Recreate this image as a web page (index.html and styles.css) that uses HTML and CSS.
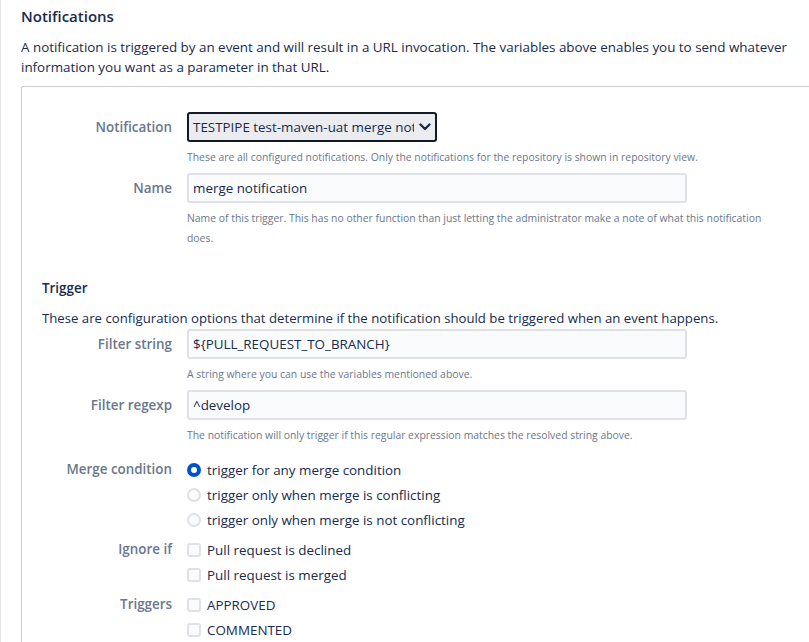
FILE: index.html
```html
<!DOCTYPE html>
<html lang="en">
<head>
  <meta charset="UTF-8" />
  <meta name="viewport" content="width=device-width, initial-scale=1" />
  <title>Notifications</title>
  <link rel="stylesheet" href="styles.css">
</head>
<body>

  <div class="page">
    <h2 class="page-title">Notifications</h2>
    <p class="intro">A notification is triggered by an event and will result in a URL invocation. The variables above enables you to send whatever information you want as a parameter in that URL.</p>

    <form class="card">
      <div class="field-group">
        <span class="field-label">Notification</span>
        <div class="field">
          <div class="select">
            <span class="select-value">TESTPIPE test-maven-uat merge notification</span>
            <svg class="chevron" width="12" height="8" viewBox="0 0 12 8"><polyline points="1.5,1.5 6,6 10.5,1.5" fill="none" stroke="#172b4d" stroke-width="2.4" stroke-linecap="round" stroke-linejoin="round"/></svg>
          </div>
          <div class="description">These are all configured notifications. Only the notifications for the repository is shown in repository view.</div>
        </div>
      </div>

      <div class="field-group">
        <span class="field-label">Name</span>
        <div class="field">
          <input class="text" type="text" value="merge notification" />
          <div class="description">Name of this trigger. This has no other function than just letting the administrator make a note of what this notification does.</div>
        </div>
      </div>

      <h3 class="section-title">Trigger</h3>
      <p class="section-intro">These are configuration options that determine if the notification should be triggered when an event happens.</p>

      <div class="field-group">
        <span class="field-label">Filter string</span>
        <div class="field">
          <input class="text" type="text" value="${PULL_REQUEST_TO_BRANCH}" />
          <div class="description">A string where you can use the variables mentioned above.</div>
        </div>
      </div>

      <div class="field-group">
        <span class="field-label">Filter regexp</span>
        <div class="field">
          <input class="text" type="text" value="^develop" />
          <div class="description">The notification will only trigger if this regular expression matches the resolved string above.</div>
        </div>
      </div>

      <!-- radios / checkboxes -->
      <div class="field-group options first-options">
        <span class="field-label">Merge condition</span>
        <div class="field">
          <label class="option"><span class="radio checked"></span>trigger for any merge condition</label>
          <label class="option"><span class="radio"></span>trigger only when merge is conflicting</label>
          <label class="option"><span class="radio"></span>trigger only when merge is not conflicting</label>
        </div>
      </div>

      <div class="field-group options">
        <span class="field-label">Ignore if</span>
        <div class="field">
          <label class="option"><span class="checkbox"></span>Pull request is declined</label>
          <label class="option"><span class="checkbox"></span>Pull request is merged</label>
        </div>
      </div>

      <div class="field-group options">
        <span class="field-label">Triggers</span>
        <div class="field">
          <label class="option"><span class="checkbox"></span>APPROVED</label>
          <label class="option"><span class="checkbox"></span>COMMENTED</label>
        </div>
      </div>
    </form>
  </div>

</body>
</html>
```

FILE: styles.css
```css
body {
  margin: 0;
  font-family: 'Open Sans', 'Noto Sans', sans-serif;
  color: #172b4d;
  background: #fff;
  border-left: 1px solid #e6e6e6;
  height: 642px;
  overflow: hidden;
}

.page {
  width: 830px;
  padding: 5px 0 0 20px;
}

.page-title {
  margin: 0;
  font-size: 15px;
  font-weight: 600;
  line-height: 22px;
}

.intro {
  max-width: 770px;
  margin: 10px 0 0;
  font-size: 13.4px;
  line-height: 20px;
}

.card {
  margin-top: 9px;
  border: 1px solid #cfcfcf;
  border-radius: 2px;
  padding: 25px 20px 20px;
}

.field-group {
  display: flex;
  align-items: flex-start;
}

.field-group + .field-group {
  margin-top: 6px;
}

.field-label {
  width: 130px;
  margin-right: 15px;
  flex-shrink: 0;
  text-align: right;
  font-size: 13.4px;
  font-weight: 600;
  line-height: 30px;
  color: #6b778c;
}

.field {
  display: flex;
  flex-direction: column;
}

.select {
  box-sizing: border-box;
  width: 250px;
  height: 30px;
  display: flex;
  align-items: center;
  padding: 0 4px;
  background: #ebecf0;
  border: 2px solid #141a26;
  border-radius: 3px;
  font-size: 13.4px;
}

.select-value {
  width: 222px;
  overflow: hidden;
  white-space: nowrap;
}

.chevron {
  margin-left: 5px;
}

.text {
  box-sizing: border-box;
  width: 500px;
  height: 30px;
  margin: 0;
  padding: 0 4px;
  background: #fafbfc;
  border: 2px solid #dfe1e6;
  border-radius: 3px;
  font-family: inherit;
  font-size: 13.4px;
  color: #172b4d;
}

.description {
  max-width: 590px;
  margin-top: 5px;
  font-size: 10.4px;
  line-height: 20px;
  color: #6b778c;
}

.section-title {
  margin: 30px 0 0;
  font-size: 13.4px;
  font-weight: 600;
  line-height: 20px;
}

.section-intro {
  margin: 10px 0 1px;
  font-size: 13.2px;
  line-height: 20px;
}

.section-intro + .field-group {
  margin-top: 0;
}

.field-group.first-options {
  margin-top: 12px;
}

.options + .options {
  margin-top: 5px;
}

.options .field-label {
  line-height: 25px;
}

.option {
  display: flex;
  align-items: center;
  gap: 6px;
  height: 25px;
  font-size: 13.4px;
  white-space: nowrap;
}

.radio,
.checkbox {
  box-sizing: border-box;
  width: 14px;
  height: 14px;
  border: 2px solid #dfe1e6;
  background: #fafbfc;
}

.radio {
  border-radius: 50%;
  position: relative;
}

.radio.checked {
  border-color: #0052cc;
  background: #0052cc;
}

.radio.checked::after {
  content: '';
  position: absolute;
  top: 2px;
  left: 2px;
  width: 6px;
  height: 6px;
  border-radius: 50%;
  background: #fff;
}

.checkbox {
  border-radius: 3px;
}
```
